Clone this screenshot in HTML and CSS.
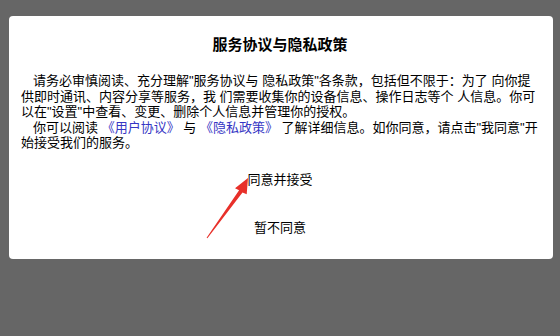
FILE: index.html
```html
<!DOCTYPE html>
<html lang="zh-CN">
<head>
    <meta charset="UTF-8">
    <meta name="viewport" content="width=device-width, initial-scale=1.0">
    <title>服务协议与隐私政策</title>
    <link rel="stylesheet" href="styles.css">
</head>
<body>
    <div class="dialog">
        <h1 class="title">服务协议与隐私政策</h1>
        <div class="content">
            <p>请务必审慎阅读、充分理解"服务协议与 隐私政策"各条款，包括但不限于：为了 向你提供即时通讯、内容分享等服务，我 们需要收集你的设备信息、操作日志等个 人信息。你可以在"设置"中查看、变更、删除个人信息并管理你的授权。</p>
            <p>你可以阅读 <a href="#">《用户协议》</a> 与 <a href="#">《隐私政策》</a> 了解详细信息。如你同意，请点击"我同意"开始接受我们的服务。</p>
        </div>
        <div class="actions">
            <button class="btn" id="btnAgree">同意并接受</button>
            <button class="btn" id="btnRefuse">暂不同意</button>
        </div>
    </div>

    <!-- 红色箭头标注 -->
    <svg class="arrow" width="60" height="80" viewBox="0 0 60 80">
        <polygon points="48,13 46.7,29.3 42.5,27.4 7.4,73.2 6.6,72.8 39.1,25.2 35,23.3" fill="#e8302a"/>
    </svg>
</body>
</html>
```

FILE: styles.css
```css
* {
    box-sizing: border-box;
}
body {
    margin: 0;
    padding: 16px 7px 0 9px;
    height: 336px;
    background-color: #666666;
    font-family: "Liberation Sans", "Noto Sans CJK SC", sans-serif;
    color: #000;
}
.dialog {
    background-color: #fff;
    border-radius: 4px;
    height: 243px;
    padding: 19px 14px 0 12px;
}
.title {
    margin: 0;
    text-align: center;
    font-size: 15px;
    line-height: 20px;
    font-weight: bold;
    color: #000;
}
.content {
    margin-top: 18px;
    font-size: 13px;
    line-height: 15.5px;
}
.content p {
    margin: 0;
    text-indent: 12px;
}
.content a {
    color: #3636c4;
    text-decoration: none;
}
.actions {
    display: flex;
    flex-direction: column;
    align-items: center;
    gap: 28px;
    margin-top: 19px;
}
.btn {
    border: none;
    background: none;
    padding: 0;
    font-family: inherit;
    font-size: 13px;
    line-height: 20px;
    color: #000;
}
.arrow {
    position: absolute;
    left: 200px;
    top: 165px;
}
```
